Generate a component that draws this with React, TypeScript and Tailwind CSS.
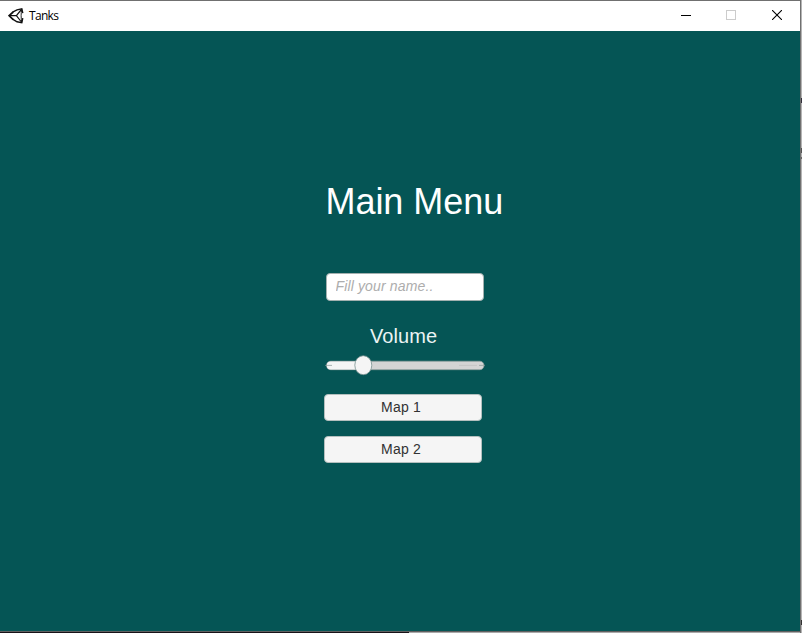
function UnityLogo() {
  return (
    <svg className="h-4 w-4 shrink-0" viewBox="0 0 16 16" fill="none" stroke="#111" strokeWidth="1.4">
      <path d="M4.6 4.2 9 1.8 13.8 .9 14.8 5.2 M14.8 10.2 13.8 14.6 9 13.8 4.6 11.2" />
      <path d="M5.2 4 1.1 7.7 5.2 11.6" strokeWidth="1.7" />
      <path d="M13.8 1.2 C12.9 5 12.9 10.4 13.8 14.4" strokeWidth=".9" />
      <path d="M1.5 7.7 H8.4 M8.4 7.7 13.4 1.5 M8.4 7.7 13.4 14" strokeWidth="1.2" />
    </svg>
  );
}

function TitleBar() {
  return (
    <div className="flex h-[30px] shrink-0 items-center bg-white pl-2">
      <UnityLogo />
      <span className="ml-[5px] font-['Open_Sans',sans-serif] text-[12px] leading-4 tracking-[-0.7px] text-black">Tanks</span>
      <div className="ml-auto flex h-full pb-[2px] text-black">
        <button className="flex w-[46px] items-center justify-center" aria-label="Minimize">
          <svg width="10" height="10" shapeRendering="crispEdges"><path d="M0 5.5H10" stroke="currentColor" /></svg>
        </button>
        <button className="flex w-[44px] items-center justify-center" aria-label="Maximize">
          <svg width="10" height="10"><rect x=".5" y=".5" width="9" height="9" fill="none" stroke="#ccc" /></svg>
        </button>
        <button className="flex w-[47px] items-center justify-center pl-px" aria-label="Close">
          <svg width="10" height="10"><path d="M0 0 10 10M10 0 0 10" stroke="currentColor" strokeWidth="1.1" /></svg>
        </button>
      </div>
    </div>
  );
}

function VolumeSlider() {
  return (
    <svg className="mt-[7px] ml-[325px] block" width="162" height="22" viewBox="0 0 162 22">
      <rect x="1.5" y="6.2" width="157.5" height="8.5" rx="4.2" fill="#d4d4d4" stroke="#8f9d9c" strokeWidth=".7" />
      <path d="M1.8 10.4a4 4 0 0 1 4-4H39v8H5.8a4 4 0 0 1-4-4Z" fill="#f5f5f5" />
      <path d="M0 10.4H7M154 10.4H160" stroke="#8b9998" strokeWidth=".7" />
      <path d="M134 10.4H152" stroke="#bababa" strokeWidth=".6" />
      <ellipse cx="38.3" cy="10.2" rx="8.5" ry="9.5" fill="#f5f5f5" stroke="#77908f" strokeWidth=".8" />
    </svg>
  );
}

function MapButton({ label }: { label: string }) {
  return (
    <button className="block h-[27px] w-[158px] rounded-[4px] border border-[#b4bfbe] bg-[#f5f5f5] pr-1 text-center text-[14px] leading-[25px] tracking-[0.2px] text-[#323232]">
      {label}
    </button>
  );
}

export default function App() {
  return (
    <div className="flex h-[633px] w-[802px] overflow-hidden bg-[#b4b4b4] font-['Liberation_Sans',Arial,sans-serif]">
      <div className="flex w-[801px] flex-col border-t border-r border-[#707070]">
        <TitleBar />
        <main className="flex h-[600px] flex-col items-start bg-[#055555]">
          <h1 className="mt-[151px] ml-[325.5px] text-[36px] leading-10 tracking-[-0.05px] text-white">Main Menu</h1>
          <input
            className="mt-[51px] ml-[326px] h-7 w-[158px] rounded-[4px] border border-[#a3b0af] bg-white px-[8.5px] pb-0.5 text-[14px] italic tracking-[0.14px] outline-none placeholder:text-[#adadad]"
            placeholder="Fill your name.."
          />
          <div className="mt-[23px] ml-[370px] text-[20px] leading-6 tracking-[0.1px] text-[#ebf3f3]">Volume</div>
          <VolumeSlider />
          <div className="mt-[17px] ml-[324px] flex flex-col gap-[15px]">
            <MapButton label="Map 1" />
            <MapButton label="Map 2" />
          </div>
        </main>
        <div className="h-px bg-[#606060]" />
        <div className="flex h-px">
          <div className="w-[409px] bg-[#171217]" />
          <div className="flex-1 bg-[#aaa]" />
        </div>
      </div>
      <div className="flex w-px flex-col">
        <div className="mt-[98px] h-[5px] bg-[#33303b]" />
        <div className="mt-[45px] h-[5px] bg-[#555]" />
        <div className="mt-1 h-0.5 bg-[#666]" />
        <div className="mt-[461px] h-[5px] bg-[#333]" />
      </div>
    </div>
  );
}
